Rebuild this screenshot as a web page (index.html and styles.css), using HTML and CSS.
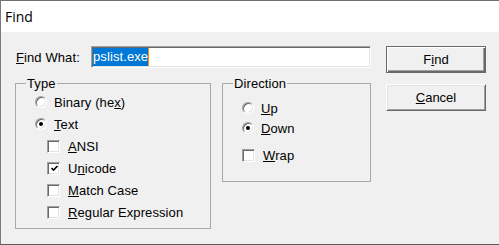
FILE: index.html
```html
<!DOCTYPE html>
<html lang="en">
<head>
    <meta charset="UTF-8">
    <title>Find</title>
    <link rel="stylesheet" href="styles.css">
</head>
<body>
    <div class="window">
        <div class="titlebar">Find</div>

        <div class="content">
            <div class="left">
                <div class="find-row">
                    <label class="find-label"><u>F</u>ind What:</label>
                    <div class="textbox"><span class="selection">pslist.exe</span></div>
                </div>

                <div class="groups">
                    <div class="group group-type">
                        <span class="legend">Type</span>
                        <div class="row"><span class="radio"></span><span class="caption">Binary (he<u>x</u>)</span></div>
                        <div class="row"><span class="radio checked"></span><span class="caption"><u>T</u>ext</span></div>
                        <div class="row sub"><span class="check"></span><span class="caption"><u>A</u>NSI</span></div>
                        <div class="row sub"><span class="check checked"><svg width="9" height="9" viewBox="0 0 9 9"><path d="M1.5 4 L3.5 6 L7.5 2" fill="none" stroke="#000" stroke-width="1.6"/></svg></span><span class="caption">U<u>n</u>icode</span></div>
                        <div class="row sub"><span class="check"></span><span class="caption"><u>M</u>atch Case</span></div>
                        <div class="row sub"><span class="check"></span><span class="caption"><u>R</u>egular Expression</span></div>
                    </div>

                    <div class="group group-direction">
                        <span class="legend">Direction</span>
                        <div class="row short"><span class="radio"></span><span class="caption"><u>U</u>p</span></div>
                        <div class="row short"><span class="radio checked"></span><span class="caption"><u>D</u>own</span></div>
                        <div class="row short wrap"><span class="check"></span><span class="caption"><u>W</u>rap</span></div>
                    </div>
                </div>
            </div>

            <div class="buttons">
                <button class="btn default">F<u>i</u>nd</button>
                <button class="btn"><u>C</u>ancel</button>
            </div>
        </div>
    </div>
</body>
</html>
```

FILE: styles.css
```css
body {
    margin: 0;
    background: #f0f0f0;
    font-family: "Liberation Sans", Arial, sans-serif;
    font-size: 13px;
    letter-spacing: 0.1px;
    color: #000;
}
.window {
    width: 499px;
    height: 245px;
    box-sizing: border-box;
    border-top: 1px solid #707070;
    border-left: 1px solid #7a7a7a;
    border-bottom: 1px solid #5a5a5a;
    background: #f0f0f0;
}
.titlebar {
    height: 31px;
    background: #fff;
    padding-left: 4px;
    font-family: "Open Sans", "Liberation Sans", sans-serif;
    font-size: 14px;
    letter-spacing: 0;
    line-height: 31px;
}
.content {
    display: flex;
    padding: 14px 0 0 14px;
}
.left {
    width: 356px;
}
.find-row {
    display: flex;
    align-items: center;
    height: 22px;
}
.find-label {
    width: 75px;
    padding-left: 1px;
}
.textbox {
    flex: 1;
    height: 22px;
    box-sizing: border-box;
    background: #fff;
    border-top: 1px solid #a0a0a0;
    border-left: 1px solid #a0a0a0;
    border-right: 1px solid #fff;
    border-bottom: 1px solid #fff;
    box-shadow: inset 1px 1px #696969, inset -1px -1px #e3e3e3;
    padding: 1px 0 0 1px;
}
.selection {
    display: inline-block;
    height: 18px;
    line-height: 18px;
    background: #0078d7;
    color: #fff;
    border-right: 1px solid #ff8c00;
}
.groups {
    display: flex;
    align-items: flex-start;
    gap: 11px;
    margin-top: 15px;
}
.group {
    position: relative;
    box-sizing: border-box;
    border: 1px solid #a8a8a8;
}
.group-type {
    width: 196px;
    height: 146px;
    padding: 7px 0 0 19px;
}
.group-direction {
    width: 149px;
    height: 99px;
    padding: 14px 0 0 19px;
}
.legend {
    position: absolute;
    top: -8px;
    left: 10px;
    padding: 0 1px;
    line-height: 15px;
    background: #f0f0f0;
}
.row {
    display: flex;
    align-items: center;
    height: 22px;
}
.row.sub {
    padding-left: 12px;
}
.row.short {
    height: 20px;
}
.row.wrap {
    margin-top: 7px;
}
.caption {
    margin-left: 7px;
    white-space: nowrap;
}
.check + .caption {
    margin-left: 8px;
}
.radio {
    position: relative;
    width: 12px;
    height: 12px;
    box-sizing: border-box;
    border-radius: 50%;
    background: #fff;
    border: 1px solid;
    border-color: #a0a0a0 #fff #fff #a0a0a0;
    box-shadow: inset 1px 1px #696969, inset -1px -1px #e3e3e3;
}
.radio.checked::after {
    content: "";
    position: absolute;
    left: 3px;
    top: 3px;
    width: 4px;
    height: 4px;
    border-radius: 50%;
    background: #000;
}
.check {
    display: flex;
    align-items: center;
    justify-content: center;
    width: 13px;
    height: 13px;
    box-sizing: border-box;
    background: #fff;
    border: 1px solid;
    border-color: #a0a0a0 #fff #fff #a0a0a0;
    box-shadow: inset 1px 1px #696969, inset -1px -1px #e3e3e3;
}
.check svg {
    display: block;
    margin: 1px 0 0 1px;
}
.buttons {
    display: flex;
    flex-direction: column;
    gap: 11px;
    margin-left: 15px;
}
.btn {
    width: 100px;
    height: 27px;
    box-sizing: border-box;
    background: #f0f0f0;
    font-family: "Liberation Sans", Arial, sans-serif;
    font-size: 13px;
    color: #000;
    padding: 0;
    border: 1px solid;
    border-color: #fff #696969 #696969 #fff;
    box-shadow: inset 1px 1px #e3e3e3, inset -1px -1px #a0a0a0;
}
.btn.default {
    border: 1px solid #696969;
    box-shadow: inset 1px 1px #fff, inset -1px -1px #696969, inset -2px -2px #a0a0a0;
}
```
